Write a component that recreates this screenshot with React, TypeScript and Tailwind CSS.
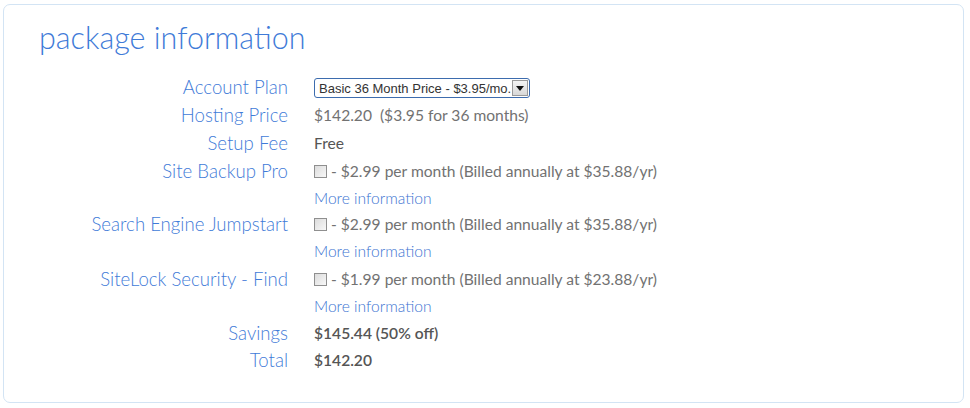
import React from "react";

type Row = {
  label: string;
  h: string;
  value: React.ReactNode;
};

const Checkbox = () => (
  <span className="inline-block w-[13px] h-[13px] border border-[#8f8f8f] bg-gradient-to-br from-[#dcdcdc] to-[#f8f8f8] mr-[4px] shrink-0" />
);

const Addon = ({ text }: { text: string }) => (
  <span className="flex items-center">
    <Checkbox />
    <span>{text}</span>
  </span>
);

const More = () => <span className="text-[#3c74d2] font-light">More information</span>;

const rows: Row[] = [
  {
    label: "Account Plan",
    h: "h-[28px]",
    value: (
      <div className="flex items-center w-[216px] h-[20px] border border-[#3d6cae] rounded-[3px] bg-white pl-[4px] pr-[1px]">
        <span className="flex-1 font-['Liberation_Sans',sans-serif] text-[13px] text-[#333] leading-none whitespace-nowrap">
          Basic 36 Month Price - $3.95/mo.
        </span>
        <span className="flex items-center justify-center w-[16px] h-[16px] border border-[#9a9a9a] bg-gradient-to-b from-[#f4f4f4] to-[#d8d8d8]">
          <svg width="8" height="5" viewBox="0 0 8 5">
            <path d="M0 0h8L4 5z" fill="#111" />
          </svg>
        </span>
      </div>
    ),
  },
  { label: "Hosting Price", h: "h-[28px]", value: <span>$142.20&nbsp;&nbsp;($3.95 for 36 months)</span> },
  { label: "Setup Fee", h: "h-[28px]", value: <span className="text-[#555]">Free</span> },
  { label: "Site Backup Pro", h: "h-[28px]", value: <Addon text="- $2.99 per month (Billed annually at $35.88/yr)" /> },
  { label: "", h: "h-[26px]", value: <More /> },
  { label: "Search Engine Jumpstart", h: "h-[26px]", value: <Addon text="- $2.99 per month (Billed annually at $35.88/yr)" /> },
  { label: "", h: "h-[28px]", value: <More /> },
  { label: "SiteLock Security - Find", h: "h-[28px]", value: <Addon text="- $1.99 per month (Billed annually at $23.88/yr)" /> },
  { label: "", h: "h-[26px]", value: <More /> },
  { label: "Savings", h: "h-[27px]", value: <span className="text-[#555] font-semibold">$145.44 (50% off)</span> },
  { label: "Total", h: "h-[28px]", value: <span className="text-[#555] font-semibold">$142.20</span> },
];

export default function App() {
  return (
    <div className="w-[970px] h-[408px] bg-white pl-[3px] pt-[4px] font-['Lato',sans-serif]">
      <div className="w-[961px] h-[399px] border border-[#d3e4f4] rounded-[7px]">
        <h1 className="pl-[35px] pt-[13px] h-[69px] text-[30.5px] leading-[38px] font-light text-[#3f7bd8]">
          package information
        </h1>
        <div className="grid grid-cols-[284px_1fr] gap-x-[26px]">
          {rows.map((r, i) => (
            <React.Fragment key={i}>
              <div className={`${r.h} flex items-center justify-end text-[18.6px] font-light text-[#3f7bd8] whitespace-nowrap`}>
                {r.label}
              </div>
              <div className={`${r.h} flex items-center text-[15.6px] text-[#727272] whitespace-nowrap`}>
                {r.value}
              </div>
            </React.Fragment>
          ))}
        </div>
      </div>
    </div>
  );
}
